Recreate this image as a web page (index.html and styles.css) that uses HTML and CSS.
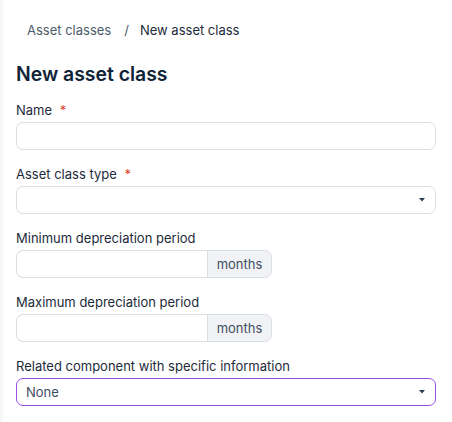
FILE: index.html
```html
<!DOCTYPE html>
<html>
<head>
<meta charset="utf-8">
<link rel="stylesheet" href="styles.css">
</head>
<body>
<div class="page">
  <nav class="breadcrumb">
    <span class="crumb-link">Asset classes</span>
    <span class="crumb-sep">/</span>
    <span class="crumb-current">New asset class</span>
  </nav>
  <h1 class="title">New asset class</h1>
  <form class="form">
    <div class="field">
      <label class="label">Name <span class="req">*</span></label>
      <div class="control"></div>
    </div>
    <div class="field">
      <label class="label">Asset class type <span class="req">*</span></label>
      <div class="control select">
        <span class="value"></span>
        <svg class="caret" width="6" height="4" viewBox="0 0 6 4"><path d="M0 0H6L3 3.5Z" fill="#2d3e50"/></svg>
      </div>
    </div>
    <div class="field">
      <label class="label">Minimum depreciation period</label>
      <div class="group">
        <div class="group-input"></div>
        <div class="addon">months</div>
      </div>
    </div>
    <div class="field">
      <label class="label">Maximum depreciation period</label>
      <div class="group">
        <div class="group-input"></div>
        <div class="addon">months</div>
      </div>
    </div>
    <div class="field">
      <label class="label">Related component with specific information</label>
      <div class="control select focused">
        <span class="value">None</span>
        <svg class="caret" width="6" height="4" viewBox="0 0 6 4"><path d="M0 0H6L3 3.5Z" fill="#2d3e50"/></svg>
      </div>
    </div>
  </form>
</div>
</body>
</html>
```
FILE: styles.css
```css
html, body {
  margin: 0;
  padding: 0;
  background: #ffffff;
}
body {
  font-family: Inter, "Noto Sans", sans-serif;
  color: #1d2b3a;
  height: 422px;
  overflow: hidden;
  background: linear-gradient(to right, #f2f3f5 0, #fbfbfc 3px, #ffffff 6px);
}
.page {
  padding: 20px 16px 0 16px;
  width: 420px;
}
.breadcrumb {
  display: flex;
  align-items: center;
  height: 20px;
  padding-left: 11px;
  font-size: 13px;
  line-height: 20px;
}
.crumb-link {
  color: #4b5b6c;
}
.crumb-sep {
  color: #4b5b6c;
  margin: 0 11px 0 13px;
}
.crumb-current {
  color: #1d2b3a;
}
.title {
  margin: 20px 0 12px 0;
  font-size: 19.4px;
  line-height: 28px;
  font-weight: 600;
  color: #0f2438;
}
.form {
  display: flex;
  flex-direction: column;
  gap: 14px;
}
.field {
  display: flex;
  flex-direction: column;
  gap: 2px;
}
.label {
  font-size: 13px;
  line-height: 20px;
  color: #1d2b3a;
}
.req {
  color: #d9442b;
  margin-left: 4px;
}
.control {
  box-sizing: border-box;
  height: 28px;
  border: 1px solid #d9dee4;
  border-radius: 7px;
  background: #ffffff;
  display: flex;
  align-items: center;
  padding: 0 10px 0 9px;
}
.select {
  justify-content: space-between;
}
.value {
  font-size: 13px;
  color: #3f4e5e;
}
.caret {
  display: block;
}
.focused {
  border-color: #9a4fe0;
}
.group {
  display: flex;
  width: 256px;
  height: 28px;
}
.group-input {
  box-sizing: border-box;
  width: 191px;
  height: 28px;
  border: 1px solid #d9dee4;
  border-right: none;
  border-radius: 7px 0 0 7px;
  background: #ffffff;
}
.addon {
  box-sizing: border-box;
  flex: 1;
  height: 28px;
  border: 1px solid #d9dee4;
  border-radius: 0 7px 7px 0;
  background: #f0f2f5;
  color: #3f4e5e;
  font-size: 13px;
  display: flex;
  align-items: center;
  justify-content: center;
}
```
